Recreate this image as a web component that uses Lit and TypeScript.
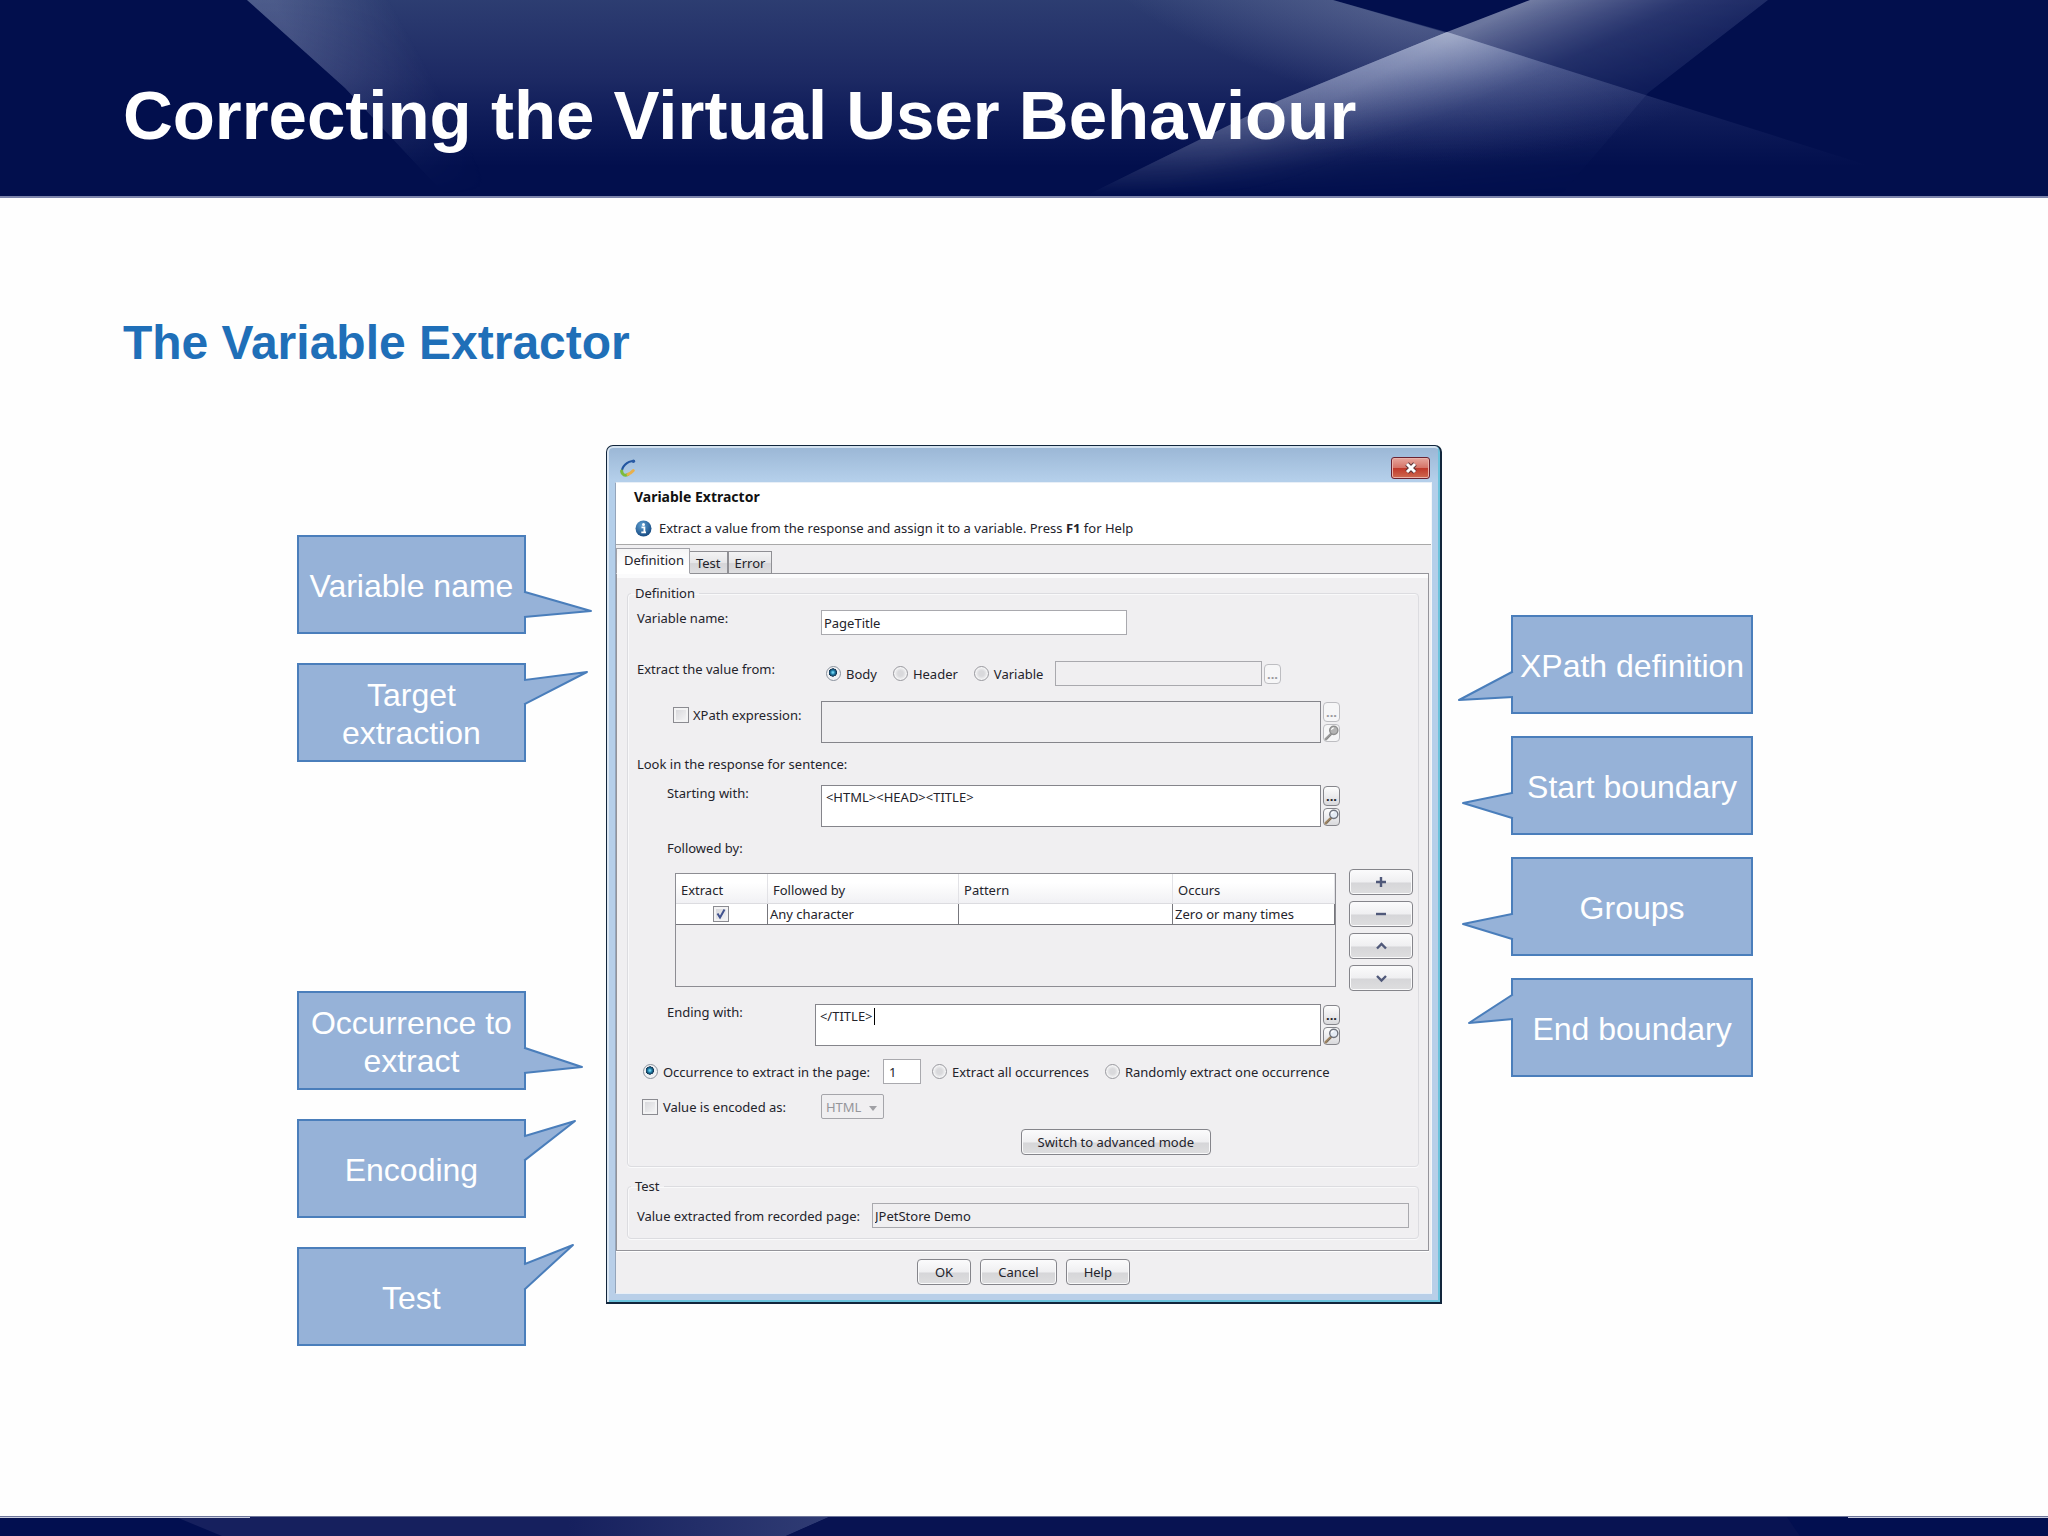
import { LitElement, html, svg, css } from "lit";
import { customElement, property } from "lit/decorators.js";

type Side = "left" | "right";

interface Note {
  text: string;
  base: [number, number];
  tip: [number, number];
}

const LEFT_TOP: Note[] = [
  { text: "Variable name", base: [57, 82], tip: [67, 76] },
  { text: "Target extraction", base: [17, 41], tip: [63, 9] },
];

const LEFT_BOTTOM: Note[] = [
  { text: "Occurrence to extract", base: [57, 82], tip: [58, 76] },
  { text: "Encoding", base: [17, 41], tip: [51, 2] },
  { text: "Test", base: [17, 42], tip: [49, -2] },
];

const RIGHT: Note[] = [
  { text: "XPath definition", base: [57, 82], tip: [54, 85] },
  { text: "Start boundary", base: [57, 82], tip: [50, 67] },
  { text: "Groups", base: [57, 82], tip: [50, 67] },
  { text: "End boundary", base: [17, 41], tip: [44, 45] },
];

/* Rectangular label whose pointed tail reaches towards the dialog. */
@customElement("call-out")
export class CallOut extends LitElement {
  @property() side: Side = "left";
  @property({ attribute: false }) note!: Note;

  static styles = css`
    :host { display: block; }
    .box {
      position: relative;
      box-sizing: border-box;
      min-height: 99px;
      padding-top: 2px;
      border: 2px solid #4a7ebb;
      background: #96b2d8;
      display: flex;
      align-items: center;
      justify-content: center;
      text-align: center;
      color: #fff;
      font: 32px/38px "Liberation Sans", Arial, sans-serif;
    }
    .tail { position: absolute; top: -2px; width: 2px; height: 2px; overflow: visible; }
    .left { left: 100%; }
    .right { right: 100%; transform: scaleX(-1); }
  `;

  render() {
    const { text, base, tip } = this.note;
    const line = `1,${base[0]} ${tip[0]},${tip[1]} 1,${base[1]}`;
    return html`<div class="box">
      <span>${text}</span>
      <svg class="tail ${this.side}" viewBox="0 0 2 2" aria-hidden="true">
        <polygon points="-1,${base[0]} ${line} -1,${base[1]}" fill="#96b2d8"></polygon>
        <polyline points=${line} fill="none" stroke="#4a7ebb" stroke-width="2" stroke-linejoin="round" stroke-linecap="square"></polyline>
      </svg>
    </div>`;
  }
}

const lens = (off = false) => html`<svg class="lens" viewBox="0 0 18 18" aria-hidden="true">
  <path d="M2 16 L8 10" stroke=${off ? "#9a9a9a" : "#a08560"} stroke-width="3" stroke-linecap="round"></path>
  <path d="M3 16 L8 11" stroke=${off ? "#858585" : "#6d6a66"} stroke-width="1"></path>
  <circle cx="11" cy="6" r="4.6" fill=${off ? "#b4b4b4" : "#e4ebf4"} stroke=${off ? "#8f8f8f" : "#70747e"} stroke-width="1.6"></circle>
  <path d="M8.4 5.4 A3 3 0 0 1 11 3.2" stroke="#fff" stroke-width="1.2" fill="none"></path>
</svg>`;

const GLYPHS = [
  { label: "Add", d: "M11 6V16M6 11H16" },
  { label: "Remove", d: "M6 11H16" },
  { label: "Move up", d: "M7 13.5L11.5 9L16 13.5" },
  { label: "Move down", d: "M7 9L11.5 13.5L16 9" },
];

/* The dialog window with its tabs, form and buttons. */
@customElement("extractor-dialog")
export class ExtractorDialog extends LitElement {
  static styles = css`
    :host { display: block; font: 13px/18px "Noto Sans", Tahoma, sans-serif; color: #23232b; }
    * { box-sizing: border-box; }
    button, input, select, textarea { font: inherit; color: inherit; margin: 0; }
    .window {
      border: 1px solid #12263c;
      border-right-width: 2px;
      border-bottom-width: 2px;
      border-radius: 7px 7px 0 0;
      padding: 0 8px 8px;
      background: linear-gradient(180deg, #9ab6d5 0, #b4cfea 34px, #b9cfe8 100%);
      box-shadow: inset 2px 0 0 #dbe7f3, inset -2px -2px 0 #6cc3dc, inset 0 2px 0 #d3e2f0;
    }
    .bar { display: flex; align-items: center; justify-content: space-between; height: 36px; padding: 7px 2px 0 4px; }
    .logo { width: 18px; height: 20px; }
    .close {
      width: 39px; height: 22px; padding: 0;
      border: 1px solid #6b2230; border-radius: 3px;
      background: linear-gradient(180deg, #e7a79e 0, #d57468 48%, #c0392b 52%, #cf6a50 100%);
      box-shadow: inset 0 0 0 1px #eab3ab;
      display: flex; align-items: center; justify-content: center;
    }
    .close svg { width: 14px; height: 12px; }
    .client { background: #f0eff1; border: 1px solid #e8eff7; border-left-color: #94a5bb; border-right-color: #f4f7fa; }
    .intro { background: #fff; padding: 5px 18px 7px; border-bottom: 1px solid #a9a9a9; }
    .heading { margin: 0 0 13px; font-size: 14px; line-height: 18px; font-weight: 700; color: #111; }
    .info { margin: 0; padding-left: 1px; display: flex; align-items: center; gap: 7px; }
    .info svg { width: 17px; height: 17px; }
    .tabs { display: flex; align-items: flex-end; padding-top: 2px; height: 28px; }
    .tab {
      height: 23px; padding: 0 6px; margin-bottom: -1px;
      border: 1px solid #8f8f94; border-left-width: 0; border-right-width: 2px;
      background: linear-gradient(180deg, #f3f3f4, #e6e6e8 50%, #d5d5d8 55%, #dedee0);
    }
    .tab:last-child { border-right-width: 1px; }
    .tab.on { height: 26px; padding: 0 5px 2px 7px; border: 1px solid #a2a2a8; border-bottom-color: #fff; background: linear-gradient(180deg, #f5f5f6, #fff 70%); }
    .panel {
      border: 1px solid #94949a; margin-right: 2px; padding: 10px 9px 11px 10px;
      box-shadow: inset 0 4px 0 #fbfbfc, 0 1px 0 #fff;
    }
    fieldset {
      margin: 0; padding: 0; min-width: 0;
      border: 1px solid #dcdce0; border-radius: 4px;
      box-shadow: inset 1px 1px 0 #f9f9fa, 0 1px 0 #fafafb;
    }
    fieldset + fieldset { margin-top: 10px; }
    legend { margin-left: 3px; padding: 0 4px; line-height: 18px; }
    .body { display: flex; flex-direction: column; padding: 8px 5px 11px 9px; gap: 13px; }
    .row { display: flex; align-items: flex-start; padding-right: 73px; }
    .cap { width: 184px; flex: none; line-height: 16px; }
    .line { line-height: 16px; }
    .in { padding-left: 30px; }
    .cap.short { width: 178px; }
    .source { margin: 13px 0 2px; }
    .text { height: 25px; padding: 0 2px; border: 1px solid #a9a9ae; background: #fff; outline: 0; border-radius: 0; min-width: 0; }
    .text:disabled, .area:disabled, .text.flat { background: #f0eff1; }
    .name { width: 306px; }
    .area { display: block; width: 100%; height: 42px; padding: 2px 4px; border: 1px solid #85858b; background: #fff; resize: none; outline: 0; border-radius: 0; line-height: 18px; overflow: hidden; }
    .wrap { position: relative; flex: 1; }
    .caret { position: absolute; left: 59px; top: 4px; width: 1px; height: 17px; background: #000; }
    .tools { display: flex; flex-direction: column; gap: 2px; padding: 1px 0 0 2px; }
    .tiny {
      width: 17px; height: 20px; padding: 0; overflow: hidden;
      border: 1px solid #85858b; border-radius: 4px; line-height: 18px; text-align: center; font-weight: 700;
      background: linear-gradient(180deg, #fdfdfd, #ececee 50%, #d9d9dc);
    }
    .tiny.find { height: 18px; }
    .tiny:disabled { border-color: #bdbdc1; color: #9a9a9e; background: #f6f6f7; }
    .lens { display: block; width: 16px; height: 16px; }
    label.opt { display: inline-flex; align-items: center; gap: 5px; line-height: 16px; }
    input[type="radio"] {
      appearance: none; width: 15px; height: 15px; border: 1px solid #98989e; border-radius: 50%;
      background: radial-gradient(circle, #d9d9dc 0 30%, #f6f6f7 70%); flex: none;
      box-shadow: inset 0 0 0 1px #f4f4f5;
    }
    input[type="radio"]:checked {
      border-color: #8a929d;
      background: radial-gradient(circle at 45% 42%, #6fd0f0 0 6%, #1f7fa8 20%, #12304e 38%, #eef0f3 42%);
    }
    input[type="checkbox"] {
      appearance: none; width: 16px; height: 16px; border: 1px solid #8b8b91; flex: none;
      background: linear-gradient(135deg, #d3d3d7, #f8f8f9); box-shadow: inset 0 0 0 2px #f3f3f4;
    }
    .tick { position: relative; display: inline-block; width: 16px; height: 16px; vertical-align: top; margin-top: 1px; }
    .tick input { display: block; }
    .tick svg { position: absolute; left: 0; top: 0; width: 16px; height: 16px; pointer-events: none; }
    .xp { width: 184px; padding: 6px 0 0 36px; flex: none; }
    .xp .opt { gap: 4px; }
    .from { display: flex; flex: 1; align-items: center; padding: 0 59px 0 5px; }
    .from .opt { margin-right: 16px; }
    .from .opt:nth-child(3) { margin-right: 12px; }
    .from .text { flex: 1; }
    .from .tiny { margin-left: 2px; }
    .groups { display: flex; gap: 13px; padding-left: 38px; }
    .list { flex: 1; margin: 4px 0; border: 1px solid #8d8d93; height: 114px; }
    table { width: 100%; border-collapse: separate; border-spacing: 0; table-layout: fixed; }
    th { height: 30px; padding: 3px 5px 0; text-align: left; font-weight: 400; background: linear-gradient(180deg, #fff 30%, #f1f1f4); border-right: 1px solid #e2e2e6; border-bottom: 1px solid #dcdce0; }
    td { height: 21px; padding: 0 2px; line-height: 18px; background: #fff; border-right: 1px solid #77777d; border-bottom: 1px solid #77777d; }
    td:first-child { text-align: center; }
    .c1 { width: 92px; }
    .c2 { width: 29%; }
    .c3 { width: 214px; }
    .order { display: flex; flex-direction: column; gap: 6px; width: 64px; }
    .btn {
      height: 26px; padding: 0 16px; border: 1px solid #85858b; border-radius: 4px;
      background: linear-gradient(180deg, #fbfbfc 0, #efeff1 50%, #d6d6d9 54%, #dededf 100%);
      box-shadow: inset 0 0 0 1px #fafafb; line-height: 22px;
    }
    .order .btn { padding: 0; display: flex; align-items: center; justify-content: center; }
    .order svg { width: 22px; height: 22px; }
    .pick { display: flex; align-items: center; padding-left: 6px; }
    .pick .text { width: 38px; padding: 0 5px; margin: 0 11px 0 13px; }
    .pick .opt + .opt { margin-left: 16px; }
    .sel { position: relative; }
    select { display: block; appearance: none; width: 63px; height: 25px; padding: 0 4px; border: 1px solid #a5a5aa; border-radius: 2px; background: #f0eff1; }
    select:disabled { color: #95959a; opacity: 1; }
    .sel svg { position: absolute; right: 7px; top: 12px; width: 8px; height: 5px; pointer-events: none; }
    .enc { display: flex; align-items: center; margin-top: -3px; padding-left: 5px; }
    .enc .opt { width: 179px; }
    .switch { align-self: flex-end; margin: -3px 202px 0 0; }
    .result { display: flex; align-items: center; gap: 12px; padding: 8px 9px 10px 9px; }
    .result .text { flex: 1; }
    .actions { display: flex; justify-content: center; gap: 9px; padding: 8px 0 8px; }
    .actions .btn { padding: 0 17px; }
  `;

  render() {
    return html`<section class="window" aria-label="Variable Extractor">
      <div class="bar">
        <svg class="logo" viewBox="0 0 18 20" aria-hidden="true">
          <path d="M15 3 C8 3 2 9 3 15" fill="none" stroke="#2356a0" stroke-width="2.2" stroke-linecap="round"></path>
          <circle cx="14.4" cy="3.2" r="1.7" fill="#2a5ba6"></circle>
          <path d="M2.6 13 C3 17 6 18 9 16.4" fill="none" stroke="#7dbb3c" stroke-width="3" stroke-linecap="round"></path>
          <path d="M9 16.4 C11.5 15.5 13 14 14.3 12.6" fill="none" stroke="#e8b04c" stroke-width="3" stroke-linecap="round"></path>
        </svg>
        <button class="close" aria-label="Close">
          <svg viewBox="0 0 14 12" aria-hidden="true">
            <path d="M3 2L11 10M11 2L3 10" stroke="#5a3438" stroke-width="5"></path>
            <path d="M3 2L11 10M11 2L3 10" stroke="#fff" stroke-width="3"></path>
          </svg>
        </button>
      </div>
      <div class="client">
        <header class="intro">
          <h3 class="heading">Variable Extractor</h3>
          <p class="info">
            <svg viewBox="0 0 17 17" aria-hidden="true">
              <defs><radialGradient id="g" cx=".4" cy=".3" r=".8"><stop offset="0" stop-color="#5fa0d2"></stop><stop offset="1" stop-color="#0d3f78"></stop></radialGradient></defs>
              <circle cx="8.5" cy="8.5" r="8" fill="url(#g)"></circle>
              <circle cx="8.5" cy="4.4" r="1.5" fill="#fff"></circle>
              <path d="M6.5 7.4H9.4V12M6.3 12.4H11" stroke="#fff" stroke-width="1.8" fill="none"></path>
            </svg>
            <span>Extract a value from the response and assign it to a variable. Press <b>F1</b> for Help</span>
          </p>
        </header>
        <nav class="tabs" role="tablist">
          <button class="tab on" role="tab" aria-selected="true">Definition</button>
          <button class="tab" role="tab">Test</button>
          <button class="tab" role="tab">Error</button>
        </nav>
        <div class="panel" role="tabpanel">
          <fieldset>
            <legend>Definition</legend>
            <div class="body">
              <div class="row">
                <label class="cap" for="name">Variable name:</label>
                <input class="text name" id="name" value="PageTitle" />
              </div>
              <div class="row source">
                <span class="cap">Extract the value from:</span>
                <div class="from">
                  <label class="opt"><input type="radio" name="source" checked />Body</label>
                  <label class="opt"><input type="radio" name="source" />Header</label>
                  <label class="opt"><input type="radio" name="source" />Variable</label>
                  <input class="text" aria-label="Variable" disabled />
                  <button class="tiny" aria-label="Browse variables" disabled>...</button>
                </div>
              </div>
              <div class="row">
                <div class="xp"><label class="opt"><input type="checkbox" />XPath expression:</label></div>
                <div class="wrap"><textarea class="area" aria-label="XPath expression" disabled></textarea></div>
                <div class="tools">
                  <button class="tiny" aria-label="Browse" disabled>...</button>
                  <button class="tiny find" aria-label="Search" disabled>${lens(true)}</button>
                </div>
              </div>
              <div class="line">Look in the response for sentence:</div>
              <div class="row">
                <label class="cap in" for="start">Starting with:</label>
                <div class="wrap"><textarea class="area" id="start" .value=${"<HTML><HEAD><TITLE>"}></textarea></div>
                <div class="tools">
                  <button class="tiny" aria-label="Browse">...</button>
                  <button class="tiny find" aria-label="Search">${lens()}</button>
                </div>
              </div>
              <div class="line in">Followed by:</div>
              <div class="groups">
                <div class="list">
                  <table>
                    <colgroup><col class="c1" /><col class="c2" /><col class="c3" /><col /></colgroup>
                    <thead><tr><th>Extract</th><th>Followed by</th><th>Pattern</th><th>Occurs</th></tr></thead>
                    <tbody><tr>
                      <td><span class="tick"><input type="checkbox" aria-label="Extract this group" checked />
                        <svg viewBox="0 0 16 16" aria-hidden="true"><path d="M4.5 7.5L7 11.5L11.5 3.5" fill="none" stroke="#42538f" stroke-width="2"></path></svg></span></td>
                      <td>Any character</td><td></td><td>Zero or many times</td>
                    </tr></tbody>
                  </table>
                </div>
                <div class="order">
                  ${GLYPHS.map((g) => html`<button class="btn" aria-label=${g.label}>
                    <svg viewBox="0 0 22 22" aria-hidden="true">${svg`<path d=${g.d} fill="none" stroke="#50597a" stroke-width="2.4"></path>`}</svg>
                  </button>`)}
                </div>
              </div>
              <div class="row">
                <label class="cap short in" for="end">Ending with:</label>
                <div class="wrap">
                  <textarea class="area" id="end" .value=${"</TITLE>"}></textarea>
                  <span class="caret"></span>
                </div>
                <div class="tools">
                  <button class="tiny" aria-label="Browse">...</button>
                  <button class="tiny find" aria-label="Search">${lens()}</button>
                </div>
              </div>
              <div class="pick">
                <label class="opt"><input type="radio" name="which" checked />Occurrence to extract in the page:</label>
                <input class="text" aria-label="Occurrence number" value="1" />
                <label class="opt"><input type="radio" name="which" />Extract all occurrences</label>
                <label class="opt"><input type="radio" name="which" />Randomly extract one occurrence</label>
              </div>
              <div class="enc">
                <label class="opt"><input type="checkbox" />Value is encoded as:</label>
                <div class="sel">
                  <select aria-label="Encoding" disabled><option>HTML</option></select>
                  <svg viewBox="0 0 10 6" aria-hidden="true"><path d="M0 0H10L5 6Z" fill="#a0a0a5"></path></svg>
                </div>
              </div>
              <button class="btn switch">Switch to advanced mode</button>
            </div>
          </fieldset>
          <fieldset>
            <legend>Test</legend>
            <div class="result">
              <label for="result">Value extracted from recorded page:</label>
              <input class="text flat" id="result" value="JPetStore Demo" readonly />
            </div>
          </fieldset>
        </div>
        <footer class="actions">
          <button class="btn">OK</button>
          <button class="btn">Cancel</button>
          <button class="btn">Help</button>
        </footer>
      </div>
    </section>`;
  }
}

@customElement("app-root")
export class AppRoot extends LitElement {
  static styles = css`
    :host {
      display: flex; flex-direction: column; min-height: 100vh;
      background: #fefefe; font-family: "Liberation Sans", Arial, sans-serif;
    }
    * { box-sizing: border-box; }
    .top { position: relative; height: 198px; background: #020f4d; border-bottom: 2px solid #7c84ab; display: flex; align-items: center; padding: 36px 6% 0; }
    .art { position: absolute; inset: 0; width: 100%; height: 100%; }
    .title { position: relative; margin: 0; color: #fff; font-size: 69px; line-height: 80px; font-weight: 700; }
    .main { flex: 1; padding-top: 117px; }
    .sub { margin: 0; padding: 0 6%; color: #1f6fb8; font-size: 48px; line-height: 56px; font-weight: 700; }
    .stage {
      width: 71.2%; margin: 74px auto 0; padding-left: 2px;
      display: grid; grid-template-columns: 229fr 80fr 836fr 69fr 242fr; align-items: start;
    }
    .notes { display: flex; flex-direction: column; gap: 229px; padding-top: 90px; }
    .group { display: flex; flex-direction: column; gap: 29px; }
    .notes.far { grid-column: 5; padding-top: 170px; }
    .far .group { gap: 22px; }
    .dialog { grid-column: 3; }
    .bottom { position: relative; height: 20px; background: #020f50; border-top: 1px solid #6d7599; }
  `;

  private group(side: Side, notes: Note[]) {
    return html`<div class="group">${notes.map((n) => html`<call-out .side=${side} .note=${n}></call-out>`)}</div>`;
  }

  render() {
    return html`
      <header class="top">
        <svg class="art" viewBox="0 0 2048 196" preserveAspectRatio="none" aria-hidden="true">
          <defs>
            <linearGradient id="beam" x1="0" y1="0" x2="0" y2="1">
              <stop offset="0" stop-color="#7288ac" stop-opacity=".38"></stop>
              <stop offset=".4" stop-color="#7c88b4" stop-opacity=".22"></stop>
              <stop offset=".85" stop-color="#5f6dab" stop-opacity="0"></stop>
            </linearGradient>
            <linearGradient id="edge" gradientUnits="userSpaceOnUse" x1="300" y1="50" x2="390" y2="0">
              <stop offset="0" stop-color="#a9b4d4" stop-opacity=".26"></stop>
              <stop offset="1" stop-color="#a9b4d4" stop-opacity="0"></stop>
            </linearGradient>
            <radialGradient id="rim" gradientUnits="userSpaceOnUse" cx="0" cy="0" r="1" gradientTransform="translate(1400 14) rotate(14) scale(330 95)">
              <stop offset="0" stop-color="#a9b0cc" stop-opacity=".3"></stop>
              <stop offset="1" stop-color="#a9b4d4" stop-opacity="0"></stop>
            </radialGradient>
            <linearGradient id="ray" gradientUnits="userSpaceOnUse" x1="1500" y1="15" x2="1580" y2="175">
              <stop offset="0" stop-color="#b8c0d8" stop-opacity=".62"></stop>
              <stop offset=".4" stop-color="#7f8cba" stop-opacity=".32"></stop>
              <stop offset="1" stop-color="#5c69a0" stop-opacity=".1"></stop>
            </linearGradient>
            <linearGradient id="slant" gradientUnits="userSpaceOnUse" x1="1278" y1="101" x2="1310" y2="175">
              <stop offset="0" stop-color="#a7b1d2" stop-opacity=".3"></stop>
              <stop offset="1" stop-color="#a7b1d2" stop-opacity="0"></stop>
            </linearGradient>
            <radialGradient id="glow" gradientUnits="userSpaceOnUse" cx="0" cy="0" r="1" gradientTransform="translate(1446 30) scale(300 132)">
              <stop offset="0" stop-color="#c6cee2" stop-opacity=".5"></stop>
              <stop offset=".4" stop-color="#8f9cc8" stop-opacity=".24"></stop>
              <stop offset="1" stop-color="#5a68a8" stop-opacity="0"></stop>
            </radialGradient>
            <linearGradient id="fall" x1="0" y1="0" x2="0" y2="1">
              <stop offset="0" stop-color="#fff"></stop>
              <stop offset=".35" stop-color="#ccc"></stop>
              <stop offset="1" stop-color="#000"></stop>
            </linearGradient>
            <mask id="fade"><rect width="2048" height="196" fill="url(#fall)"></rect></mask>
          </defs>
          <polygon points="247,0 1333,0 1450,33 1639,93 1965,196 446,196 345,88" fill="url(#beam)"></polygon>
          <polygon points="247,0 450,0 560,196 446,196 345,88" fill="url(#edge)" mask="url(#fade)"></polygon>
          <polygon points="1000,0 1333,0 1447,33 1278,101 1100,196" fill="url(#rim)"></polygon>
          <polygon points="1530,0 1768,0 1648,93 1560,196 1085,196 1278,101 1447,32" fill="url(#ray)" mask="url(#fade)"></polygon>
          <polygon points="1447,32 1639,93 1965,196 1085,196 1278,101" fill="url(#slant)" mask="url(#fade)"></polygon>
          <polygon points="1447,32 1639,93 1965,196 1085,196 1278,101" fill="url(#glow)"></polygon>
        </svg>
        <h1 class="title">Correcting the Virtual User Behaviour</h1>
      </header>
      <main class="main">
        <h2 class="sub">The Variable Extractor</h2>
        <div class="stage">
          <div class="notes">${this.group("left", LEFT_TOP)}${this.group("left", LEFT_BOTTOM)}</div>
          <extractor-dialog class="dialog"></extractor-dialog>
          <div class="notes far">${this.group("right", RIGHT)}</div>
        </div>
      </main>
      <footer class="bottom">
        <svg class="art" viewBox="0 0 2048 19" preserveAspectRatio="none" aria-hidden="true">
          <defs>
            <linearGradient id="low" x1="0" y1="0" x2="1" y2="0">
              <stop offset="0" stop-color="#16205e"></stop>
              <stop offset=".6" stop-color="#16205e"></stop>
              <stop offset="1" stop-color="#303c74"></stop>
            </linearGradient>
          </defs>
          <polygon points="176,0 829,0 786,19 222,19" fill="url(#low)"></polygon>
          <polygon points="829,0 1787,0 1800,19 786,19" fill="#081352"></polygon>
          <path d="M0 0H250M1848 0H2048" stroke="#c9cde0" stroke-width="2"></path>
        </svg>
      </footer>
    `;
  }
}
